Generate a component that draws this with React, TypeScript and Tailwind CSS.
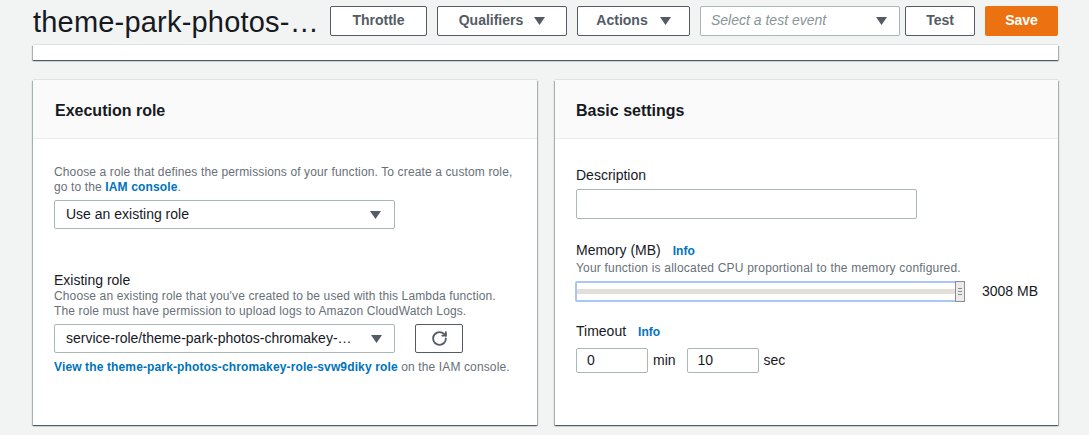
import React from "react";
import { RotateCw } from "lucide-react";

const Tri = ({ className = "" }: { className?: string }) => (
  <svg width="11" height="8" viewBox="0 0 11 8" className={className}>
    <polygon points="0,0 11,0 5.5,8" fill="#545b64" />
  </svg>
);

const cardShadow =
  "shadow-[0_1px_1px_0_rgba(0,28,36,0.45),1px_1px_1px_0_rgba(0,28,36,0.25),-1px_1px_1px_0_rgba(0,28,36,0.25),0_-1px_0_0_rgba(0,28,36,0.08)]";

export default function App() {
  return (
    <div className="w-[1089px] h-[435px] overflow-hidden bg-[#f2f3f3] font-['Liberation_Sans',Arial,sans-serif] text-[#16191f]">
      {/* header */}
      <div className="flex items-center h-[45px] pl-[33px]">
        <div className="w-[284px] text-[29px] leading-[34px] text-[#16191f] whitespace-nowrap tracking-[0.2px] -mt-[2px]">
          theme-park-photos-…
        </div>
        <div className="flex items-center ml-[13px] gap-[10px] -mt-[4px]">
          <button className="w-[97px] h-[30px] border border-[#545b64] rounded-[2px] bg-white text-[14px] font-bold text-[#545b64]">
            Throttle
          </button>
          <button className="w-[130px] h-[30px] border border-[#545b64] rounded-[2px] bg-white text-[14px] font-bold text-[#545b64] flex items-center justify-center gap-[11px]">
            Qualifiers <Tri />
          </button>
          <button className="w-[113px] h-[30px] border border-[#545b64] rounded-[2px] bg-white text-[14px] font-bold text-[#545b64] flex items-center justify-center gap-[12px]">
            Actions <Tri />
          </button>
          <div className="w-[200px] h-[30px] border border-[#aab7b8] rounded-[2px] bg-white flex items-center justify-between pl-[10px] pr-[12px]">
            <span className="text-[14px] italic text-[#879596]">Select a test event</span>
            <Tri />
          </div>
          <button className="w-[70px] h-[30px] -ml-[5px] border border-[#545b64] rounded-[2px] bg-white text-[14px] font-bold text-[#545b64]">
            Test
          </button>
          <button className="w-[73px] h-[30px] rounded-[2px] bg-[#ec7211] text-[14px] font-bold text-white">
            Save
          </button>
        </div>
      </div>

      {/* top collapsed card */}
      <div className={`ml-[33px] w-[1025px] h-[15px] bg-white ${cardShadow}`} />

      {/* cards */}
      <div className="grid grid-cols-[504px_503px] gap-[18px] ml-[33px] mt-[20px]">
        {/* Execution role */}
        <div className={`h-[345px] bg-white ${cardShadow}`}>
          <div className="h-[59px] bg-[#fafafa] border-b border-[#eaeded] flex items-center px-[22px] pt-[3px]">
            <h2 className="text-[16px] font-bold text-[#16191f]">Execution role</h2>
          </div>
          <div className="px-[21px] pt-[26px]">
            <p className="text-[12px] leading-[15px] tracking-[0.13px] text-[#687078] whitespace-nowrap">
              Choose a role that defines the permissions of your function. To create a custom role,
              <br />
              go to the <span className="font-bold text-[#0073bb]">IAM console</span>.
            </p>
            <div className="mt-[5px] w-[341px] h-[29px] border border-[#aab7b8] rounded-[2px] flex items-center justify-between pl-[11px] pr-[13px]">
              <span className="text-[14px] text-[#16191f]">Use an existing role</span>
              <Tri />
            </div>
            <div className="mt-[43px] text-[14px] leading-[17px] text-[#16191f]">Existing role</div>
            <p className="text-[12px] leading-[15px] tracking-[0.13px] text-[#687078] whitespace-nowrap">
              Choose an existing role that you've created to be used with this Lambda function.
              <br />
              The role must have permission to upload logs to Amazon CloudWatch Logs.
            </p>
            <div className="mt-[5px] flex items-center gap-[20px]">
              <div className="w-[341px] h-[29px] border border-[#aab7b8] rounded-[2px] flex items-center justify-between pl-[11px] pr-[12px]">
                <span className="whitespace-nowrap text-[14px] text-[#16191f]">
                  service-role/theme-park-photos-chromakey-…
                </span>
                <Tri />
              </div>
              <button className="w-[48px] h-[29px] border border-[#545b64] rounded-[2px] flex items-center justify-center">
                <RotateCw size={17} strokeWidth={2.6} color="#545b64" />
              </button>
            </div>
            <p className="mt-[7px] text-[12px] leading-[15px] tracking-[0.13px] text-[#687078] whitespace-nowrap">
              <span className="font-bold text-[#0073bb]">
                View the theme-park-photos-chromakey-role-svw9diky role
              </span>{" "}
              on the IAM console.
            </p>
          </div>
        </div>

        {/* Basic settings */}
        <div className={`h-[345px] bg-white ${cardShadow}`}>
          <div className="h-[59px] bg-[#fafafa] border-b border-[#eaeded] flex items-center px-[21px] pt-[3px]">
            <h2 className="text-[16px] font-bold text-[#16191f]">Basic settings</h2>
          </div>
          <div className="px-[21px] pt-[28px]">
            <div className="text-[14px] leading-[17px] text-[#16191f]">Description</div>
            <div className="mt-[5px] w-[341px] h-[30px] border border-[#aab7b8] rounded-[2px] bg-white" />
            <div className="mt-[23px] flex items-baseline gap-[12px] leading-[17px]">
              <span className="text-[14px] text-[#16191f]">Memory (MB)</span>
              <span className="text-[12px] font-bold text-[#0073bb]">Info</span>
            </div>
            <p className="mt-[1px] text-[12px] leading-[15px] tracking-[0.2px] text-[#687078] whitespace-nowrap">
              Your function is allocated CPU proportional to the memory configured.
            </p>
            <div className="mt-[5px] flex items-center gap-[17px] whitespace-nowrap">
              <div className="shrink-0 w-[390px] h-[21px] -ml-[1px] border-2 border-[#a9c6f4] rounded-[2px] flex items-center">
                <div className="flex-1 h-[5px] bg-[#e2ded8]" />
                <div className="w-[10px] h-[21px] -mr-[2px] bg-[#ebebeb] border border-[#8d8d8d] flex flex-col items-center justify-center gap-[2px]">
                  <div className="w-[4px] h-px bg-[#8d8d8d]" />
                  <div className="w-[4px] h-px bg-[#8d8d8d]" />
                  <div className="w-[4px] h-px bg-[#8d8d8d]" />
                </div>
              </div>
              <span className="shrink-0 text-[14px] text-[#16191f]">3008 MB</span>
            </div>
            <div className="mt-[21px] flex items-baseline gap-[12px] leading-[17px]">
              <span className="text-[14px] text-[#16191f]">Timeout</span>
              <span className="text-[12px] font-bold text-[#0073bb]">Info</span>
            </div>
            <div className="mt-[7px] flex items-center text-[14px] text-[#16191f]">
              <div className="w-[72px] h-[25px] border border-[#aab7b8] rounded-[2px] flex items-center pl-[10px]">0</div>
              <span className="ml-[5px]">min</span>
              <div className="ml-[11px] w-[72px] h-[25px] border border-[#aab7b8] rounded-[2px] flex items-center pl-[10px]">10</div>
              <span className="ml-[5px]">sec</span>
            </div>
          </div>
        </div>
      </div>
    </div>
  );
}
